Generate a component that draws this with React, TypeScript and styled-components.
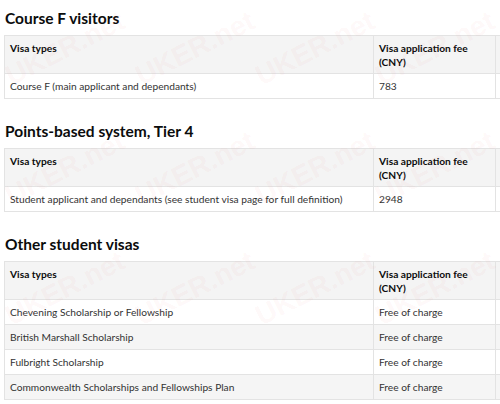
import React from "react";
import styled, { createGlobalStyle } from "styled-components";

const Global = createGlobalStyle`
  html, body { margin: 0; padding: 0; background: #fff; overflow: hidden; }
  body { font-family: Lato, "Noto Sans", "Liberation Sans", Arial, sans-serif; color: #0b0c0c; }
`;

const Page = styled.div`
  position: relative;
  width: 500px;
  height: 404px;
  overflow: hidden;
  padding: 8px 0 0 4px;
  box-sizing: border-box;
`;

const Section = styled.section`
  & + & { margin-top: 22px; }
`;

const Heading = styled.h2`
  margin: 0 0 7px 1px;
  font-size: 15.5px;
  line-height: 20px;
  font-weight: 700;
  color: #0b0c0c;
  white-space: nowrap;
`;

const Table = styled.table`
  border-collapse: collapse;
  table-layout: fixed;
  width: 620px;
  font-size: 10.2px;
  line-height: 14px;
`;

const Col = styled.col<{ $w: number }>`
  width: ${(p) => p.$w}px;
`;

const Th = styled.th`
  text-align: left;
  vertical-align: top;
  font-weight: 700;
  padding: 5px 5px 4px 5px;
  border: 1px solid #e3e3e3;
  background: #f4f4f4;
  color: #0b0c0c;
`;

const Row = styled.tr<{ $shade?: boolean }>`
  background: ${(p) => (p.$shade ? "#f5f5f5" : "#ffffff")};
`;

const Td = styled.td`
  text-align: left;
  vertical-align: top;
  padding: 5px 5px 5px 5px;
  border: 1px solid #e3e3e3;
  color: #333;
  white-space: nowrap;
`;

const Marks = styled.div`
  position: absolute;
  inset: 0;
  pointer-events: none;
`;

const Mark = styled.span`
  position: absolute;
  font-family: "Liberation Sans", Arial, sans-serif;
  font-weight: 700;
  font-size: 28px;
  color: rgba(230, 80, 80, 0.05);
  transform: rotate(-27deg);
  transform-origin: left bottom;
  white-space: nowrap;
`;

type Sec = { title: string; rows: [string, string][] };

const sections: Sec[] = [
  {
    title: "Course F visitors",
    rows: [["Course F (main applicant and dependants)", "783"]],
  },
  {
    title: "Points-based system, Tier 4",
    rows: [["Student applicant and dependants (see student visa page for full definition)", "2948"]],
  },
  {
    title: "Other student visas",
    rows: [
      ["Chevening Scholarship or Fellowship", "Free of charge"],
      ["British Marshall Scholarship", "Free of charge"],
      ["Fulbright Scholarship", "Free of charge"],
      ["Commonwealth Scholarships and Fellowships Plan", "Free of charge"],
    ],
  },
];

const marks: [number, number][] = [];
[60, 180, 300].forEach((y) => {
  [15, 145, 265, 385].forEach((x) => marks.push([x, y]));
});

export default function App() {
  return (
    <>
      <Global />
      <Page>
        {sections.map((s) => (
          <Section key={s.title}>
            <Heading>{s.title}</Heading>
            <Table>
              <colgroup>
                <Col $w={369} />
                <Col $w={122} />
                <Col $w={129} />
              </colgroup>
              <thead>
                <tr>
                  <Th>Visa types</Th>
                  <Th>Visa application fee (CNY)</Th>
                  <Th />
                </tr>
              </thead>
              <tbody>
                {s.rows.map((r, i) => (
                  <Row key={r[0]} $shade={i % 2 === 1}>
                    <Td>{r[0]}</Td>
                    <Td>{r[1]}</Td>
                    <Td />
                  </Row>
                ))}
              </tbody>
            </Table>
          </Section>
        ))}
        <Marks>
          {marks.map(([x, y]) => (
            <Mark key={`${x}-${y}`} style={{ left: x, top: y }}>
              UKER.net
            </Mark>
          ))}
        </Marks>
      </Page>
    </>
  );
}
